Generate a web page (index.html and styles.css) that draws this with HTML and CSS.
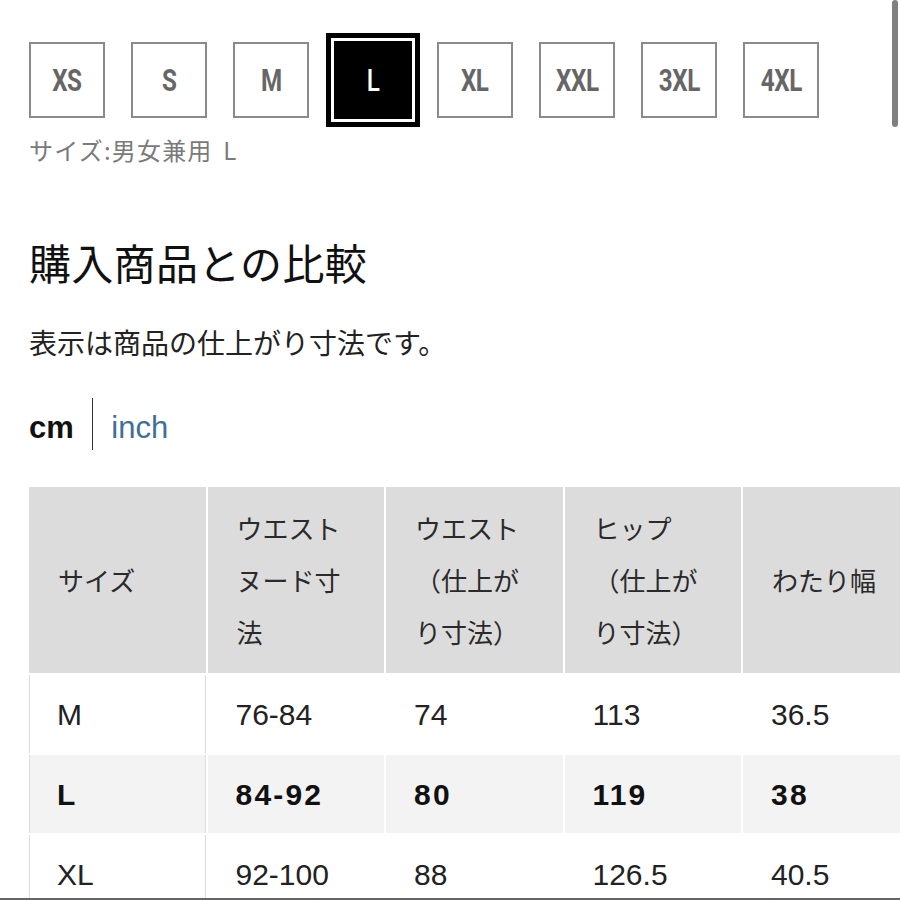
FILE: index.html
```html
<!DOCTYPE html>
<html lang="ja">
<head>
<meta charset="utf-8">
<link rel="stylesheet" href="styles.css">
</head>
<body>
<div class="page">
  <div class="sizes">
    <div class="size"><span>XS</span></div>
    <div class="size"><span>S</span></div>
    <div class="size"><span>M</span></div>
    <div class="size selected"><span>L</span></div>
    <div class="size"><span>XL</span></div>
    <div class="size"><span>XXL</span></div>
    <div class="size"><span>3XL</span></div>
    <div class="size"><span>4XL</span></div>
  </div>
  <div class="size-label">サイズ:男女兼用 L</div>
  <h2 class="heading">購入商品との比較</h2>
  <p class="note">表示は商品の仕上がり寸法です。</p>
  <div class="units">
    <span class="unit active">cm</span>
    <span class="divider"></span>
    <span class="unit link">inch</span>
  </div>
  <div class="table">
    <div class="th">サイズ</div>
    <div class="th">ウエストヌード寸法</div>
    <div class="th">ウエスト（仕上がり寸法）</div>
    <div class="th">ヒップ（仕上がり寸法）</div>
    <div class="th">わたり幅</div>

    <div class="td first">M</div>
    <div class="td">76-84</div>
    <div class="td">74</div>
    <div class="td">113</div>
    <div class="td">36.5</div>

    <div class="td first hl">L</div>
    <div class="td hl">84-92</div>
    <div class="td hl">80</div>
    <div class="td hl">119</div>
    <div class="td hl">38</div>

    <div class="td first">XL</div>
    <div class="td">92-100</div>
    <div class="td">88</div>
    <div class="td">126.5</div>
    <div class="td">40.5</div>
  </div>
</div>
<div class="scrollbar"></div>
<div class="bottom-edge"></div>
</body>
</html>
```
FILE: styles.css
```css
html, body {
  margin: 0;
  padding: 0;
  background: #fff;
}
body {
  width: 900px;
  height: 900px;
  overflow: hidden;
  position: relative;
  font-family: "Noto Sans CJK JP", "Liberation Sans", sans-serif;
  color: #222;
}
.page {
  padding: 41px 0 0 29px;
}
.sizes {
  display: flex;
  gap: 26px;
  align-items: center;
}
.size {
  width: 76px;
  height: 76px;
  box-sizing: border-box;
  border: 2px solid #8a8a8a;
  display: flex;
  align-items: center;
  justify-content: center;
  font-family: Roboto, "Liberation Sans", sans-serif;
  font-weight: 700;
  font-size: 31px;
  color: #666;
}
.size span {
  display: inline-block;
  transform: scaleX(0.78);
  letter-spacing: -0.5px;
}
.size.selected {
  width: 78px;
  height: 78px;
  margin: 0 -1px;
  background: #000;
  border-color: #000;
  color: #fff;
  box-shadow: 0 0 0 3px #fff, 0 0 0 8px #000;
  font-weight: 500;
}
.size-label {
  margin-top: 14px;
  font-size: 24px;
  line-height: 34px;
  letter-spacing: 1.2px;
  word-spacing: 4px;
  color: #7a7a7a;
}
.heading {
  margin: 70px 0 0;
  font-size: 42px;
  line-height: 50px;
  font-weight: 400;
  letter-spacing: 0.3px;
  color: #111;
}
.note {
  margin: 35px 0 0;
  font-size: 28px;
  line-height: 40px;
  color: #222;
}
.units {
  margin-top: 36px;
  display: flex;
  align-items: flex-end;
  height: 52px;
  gap: 18px;
  font-family: "Liberation Sans", Arial, sans-serif;
  font-size: 31px;
}
.unit {
  line-height: 1;
  margin-bottom: 7px;
}
.unit.active {
  font-weight: 700;
  color: #111;
}
.unit.link {
  color: #3d6f98;
}
.divider {
  width: 1.5px;
  height: 52px;
  background: #333;
}
.table {
  margin-top: 37px;
  display: grid;
  grid-template-columns: repeat(5, 176.5px);
  grid-template-rows: 186px 78px 78px 78px;
  gap: 2px;
}
.th {
  background: #dcdcdc;
  display: flex;
  align-items: center;
  padding: 0 20px 0 29px;
  font-size: 26px;
  line-height: 52px;
  color: #2a2a2a;
}
.td {
  display: flex;
  align-items: center;
  padding: 2px 0 0 28px;
  font-family: "Liberation Sans", Arial, sans-serif;
  font-size: 30px;
  color: #222;
}
.td.first {
  border-left: 1px solid #dcdcdc;
  border-right: 1px solid #dcdcdc;
  padding-left: 27px;
}
.td.hl {
  background: #f3f3f3;
  font-weight: 700;
  color: #111;
  letter-spacing: 2.2px;
}
.scrollbar {
  position: absolute;
  right: 2px;
  top: 0;
  width: 6px;
  height: 127px;
  border-radius: 3px;
  background: #808080;
}
.bottom-edge {
  position: absolute;
  left: 0;
  right: 0;
  bottom: 0;
  height: 2px;
  background: #666;
}
```
